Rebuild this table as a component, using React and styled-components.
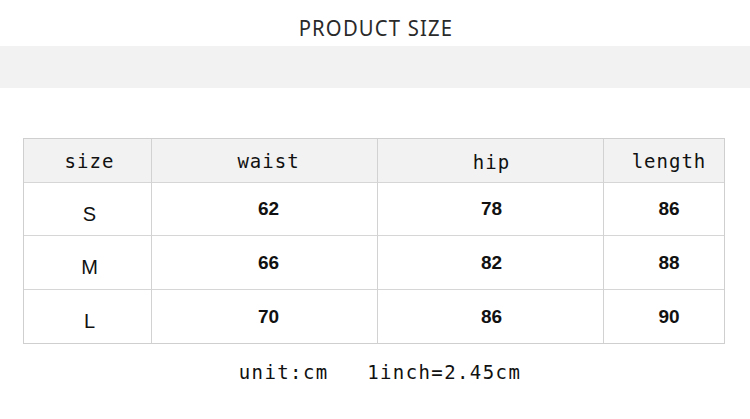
import React from 'react';
import styled, { createGlobalStyle } from 'styled-components';

const GlobalStyle = createGlobalStyle`
  html, body {
    margin: 0;
    padding: 0;
    background: #ffffff;
  }
`;

const Page = styled.div`
  width: 750px;
  height: 419px;
  display: flex;
  flex-direction: column;
  align-items: center;
  overflow: hidden;
`;

const Title = styled.h1`
  margin: 0;
  height: 46px;
  line-height: 55px;
  font-family: 'Noto Sans', sans-serif;
  font-weight: 400;
  font-size: 22px;
  letter-spacing: 1.3px;
  color: #2a2a2a;
  padding-left: 2px;
  transform: scaleX(0.92);
`;

const Band = styled.div`
  align-self: stretch;
  height: 42px;
  background: #f2f2f2;
  margin-bottom: 50px;
`;

const Table = styled.div`
  display: grid;
  grid-template-columns: 128px 226px 226px 120px;
  grid-template-rows: 43px 53px 54px 54px;
  border: 1px solid #cfcfcf;
  margin-left: -2px;
`;

const Cell = styled.div`
  display: flex;
  align-items: center;
  justify-content: center;
  padding-left: ${(p) => p.$shift || 6}px;
  padding-top: ${(p) => p.$drop || 0}px;
  border-right: ${(p) => (p.$last ? 'none' : '1px solid #d2d2d2')};
  border-top: ${(p) => (p.$first ? 'none' : '1px solid #d6d6d6')};
  background: ${(p) => (p.$head ? '#f2f2f2' : '#ffffff')};
  color: #111;
`;

const HeadText = styled.span`
  font-family: 'DejaVu Sans Mono', 'Liberation Mono', monospace;
  font-size: 19px;
  letter-spacing: 1px;
`;

const SizeText = styled.span`
  font-family: 'Liberation Sans', Arial, sans-serif;
  font-size: 20px;
  margin-top: 10px;
`;

const Num = styled.span`
  font-family: 'Liberation Sans', Arial, sans-serif;
  font-weight: 700;
  font-size: 19px;
`;

const Footer = styled.div`
  margin-top: 17px;
  font-family: 'DejaVu Sans Mono', 'Liberation Mono', monospace;
  font-size: 19px;
  letter-spacing: 1.4px;
  color: #111;
  white-space: pre;
  padding-left: 10px;
`;

const heads = [
  { label: 'size', drop: 0 },
  { label: 'waist', drop: 0 },
  { label: 'hip', drop: 2 },
  { label: 'length', drop: -2 },
];

const rows = [
  ['S', '62', '78', '86'],
  ['M', '66', '82', '88'],
  ['L', '70', '86', '90'],
];

const shifts = [4, 8, 2, 10];

export default function App() {
  return (
    <>
      <GlobalStyle />
      <Page>
        <Title>PRODUCT SIZE</Title>
        <Band />
        <Table>
          {heads.map((h, i) => (
            <Cell key={h.label} $head $first $last={i === 3} $shift={shifts[i]} $drop={h.drop}>
              <HeadText>{h.label}</HeadText>
            </Cell>
          ))}
          {rows.map((r) =>
            r.map((v, i) => (
              <Cell key={r[0] + i} $last={i === 3} $shift={shifts[i]}>
                {i === 0 ? <SizeText>{v}</SizeText> : <Num>{v}</Num>}
              </Cell>
            ))
          )}
        </Table>
        <Footer>{'unit:cm   1inch=2.45cm'}</Footer>
      </Page>
    </>
  );
}
